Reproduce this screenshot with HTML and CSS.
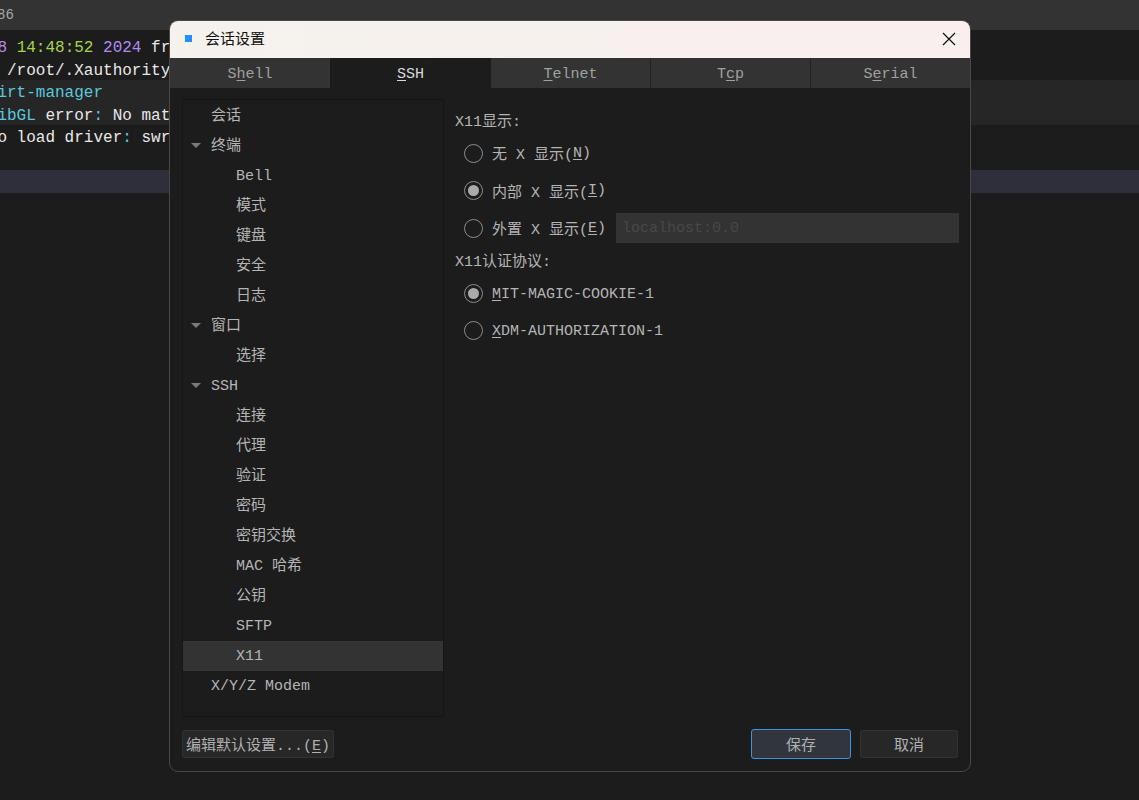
FILE: index.html
```html
<!DOCTYPE html>
<html lang="zh-CN">
<head>
<meta charset="utf-8">
<title>会话设置</title>
<link rel="stylesheet" href="styles.css">
</head>
<body>
<div class="app">
  <div class="topbar"><span class="topbar-text">86</span></div>
  <div class="terminal">
    <div class="line"><span class="purple">8</span> <span class="green">14:48:52</span> <span class="purple">2024</span> from 192.168.1.8</div>
    <div class="line"> /root/.Xauthority does not exist</div>
    <div class="line band"><span class="cyan">irt-manager</span></div>
    <div class="line band"><span class="cyan">ibGL</span> error<span class="cyan">:</span> No matching fbConfigs or visuals found</div>
    <div class="line">o load driver<span class="cyan">:</span> swrast</div>
    <div class="line"></div>
    <div class="line cursor"></div>
  </div>
</div>

<div class="dialog">
  <div class="titlebar">
    <span class="app-icon"></span>
    <span class="title">会话设置</span>
    <svg class="close" width="14" height="14" viewBox="0 0 14 14"><path d="M1 1L13 13M13 1L1 13" stroke="#111" stroke-width="1.2" fill="none"/></svg>
  </div>
  <div class="tabs">
    <div class="tab first">S<u>h</u>ell</div>
    <div class="tab active"><u>S</u>SH</div>
    <div class="tab"><u>T</u>elnet</div>
    <div class="tab">T<u>c</u>p</div>
    <div class="tab">S<u>e</u>rial</div>
  </div>
  <div class="content">
    <div class="tree">
      <div class="node l1">会话</div>
      <div class="node l1"><span class="arrow"></span>终端</div>
      <div class="node l2">Bell</div>
      <div class="node l2">模式</div>
      <div class="node l2">键盘</div>
      <div class="node l2">安全</div>
      <div class="node l2">日志</div>
      <div class="node l1"><span class="arrow"></span>窗口</div>
      <div class="node l2">选择</div>
      <div class="node l1"><span class="arrow"></span>SSH</div>
      <div class="node l2">连接</div>
      <div class="node l2">代理</div>
      <div class="node l2">验证</div>
      <div class="node l2">密码</div>
      <div class="node l2">密钥交换</div>
      <div class="node l2">MAC 哈希</div>
      <div class="node l2">公钥</div>
      <div class="node l2">SFTP</div>
      <div class="node l2 selected">X11</div>
      <div class="node l1">X/Y/Z Modem</div>
    </div>
    <div class="panel">
      <div class="group-label">X11显示:</div>
      <div class="radio-row"><span class="radio"></span>无 X 显示(<u>N</u>)</div>
      <div class="radio-row"><span class="radio checked"></span>内部 X 显示(<u>I</u>)</div>
      <div class="radio-row"><span class="radio"></span>外置 X 显示(<u>E</u>)<span class="input">localhost:0.0</span></div>
      <div class="group-label second">X11认证协议:</div>
      <div class="radio-row"><span class="radio checked"></span><span class="latin"><u>M</u>IT-MAGIC-COOKIE-1</span></div>
      <div class="radio-row"><span class="radio"></span><span class="latin"><u>X</u>DM-AUTHORIZATION-1</span></div>
    </div>
  </div>
  <div class="footer">
    <button class="btn btn-edit">编辑默认设置...(<u>E</u>)</button>
    <div class="footer-right">
      <button class="btn btn-save">保存</button>
      <button class="btn btn-cancel">取消</button>
    </div>
  </div>
</div>
</body>
</html>
```
FILE: styles.css
```css
* { box-sizing: border-box; }
html, body { margin: 0; padding: 0; height: 100%; overflow: hidden; background: #1c1c1c; }
body { font-family: "Liberation Mono", "Noto Sans CJK SC", monospace; }

.app { display: flex; flex-direction: column; height: 800px; }
.topbar { height: 30px; background: #333333; color: #a8a8a8; font-size: 14px; line-height: 30px; overflow: hidden; white-space: pre; }
.topbar-text { margin-left: -3px; }
.terminal { padding-top: 5px; background: #1c1c1c; overflow: hidden; }
.line { height: 22.5px; line-height: 26px; font-size: 16px; color: #e8e8e8; white-space: pre; margin-left: -2.6px; }
.band { background: #262626; margin-left: 0; text-indent: -2.6px; }
.cursor { background: #2f2f3b; margin-left: 0; }
.purple { color: #b18cf0; }
.green { color: #a5d649; }
.cyan { color: #5cc8dc; }

.dialog { position: absolute; left: 169px; top: 20px; width: 802px; height: 752px; display: flex; flex-direction: column; background: #1c1c1c; border: 1px solid #484848; border-radius: 9px; overflow: hidden; color: #b4b4b4; font-size: 15px; }
.titlebar { height: 37px; flex: none; display: flex; align-items: center; padding: 0 0 2px 15px; background: linear-gradient(90deg, #f5f2ec, #f9efef); color: #111; }
.app-icon { width: 7px; height: 7px; background: #1e90ff; margin-right: 13px; }
.title { flex: 1; padding-bottom: 2px; font-family: "Noto Sans CJK SC", sans-serif; font-size: 15px; }
.close { margin-right: 14px; }

.tabs { height: 30px; flex: none; display: grid; grid-template-columns: 160px 161px 160px 160px 159px; background: #333333; }
.tab { height: 30px; line-height: 34px; text-align: center; background: #333333; color: #a0a0a0; border-right: 1px solid #222222; }
.tab.first, .tab:last-child { border-right: 0; }
.tab.active { background: #1c1c1c; color: #d8d8d8; border-right: 0; }
u { text-underline-offset: 2px; }

.content { flex: 1; display: flex; min-height: 0; padding: 11px 11px 0 12px; }
.tree { width: 262px; height: 618px; flex: none; border: 1px solid #161616; padding-top: 1px; }
.node { position: relative; height: 30px; line-height: 31.5px; white-space: pre; }
.l1 { padding-left: 28px; }
.l2 { padding-left: 53px; }
.selected { background: #333333; }
.arrow { position: absolute; left: 8px; top: 12px; width: 0; height: 0; border-left: 5px solid transparent; border-right: 5px solid transparent; border-top: 5px solid #7a7a7a; }

.panel { flex: 1; padding: 9.5px 0 0 11px; }
.group-label { height: 26px; line-height: 28px; }
.group-label.second { margin-top: 1.5px; }
.radio-row { height: 37.5px; display: flex; align-items: center; padding-left: 9px; white-space: pre; }
.latin { padding-top: 2px; }
.radio { width: 19px; height: 19px; flex: none; margin-right: 9px; border: 1.5px solid #8c8c8c; border-radius: 50%; display: flex; align-items: center; justify-content: center; }
.radio.checked::after { content: ""; width: 11px; height: 11px; border-radius: 50%; background: #aaaaaa; }
.input { flex: 1; height: 30px; line-height: 32px; margin-left: 10px; padding-left: 6px; background: #333333; color: #484848; }

.footer { height: 54px; flex: none; display: flex; justify-content: space-between; padding: 13px 12px 0 12px; }
.footer-right { display: flex; gap: 9px; }
.btn { height: 28px; padding: 0; font: inherit; color: #b0b0b0; border-radius: 3px; background: #272727; border: 1px solid #333333; }
.btn-edit { width: 152px; }
.btn-save { width: 100px; height: 30px; margin-top: -1px; background: #31363e; border: 1px solid #3f94d8; }
.btn-cancel { width: 98px; }
```
